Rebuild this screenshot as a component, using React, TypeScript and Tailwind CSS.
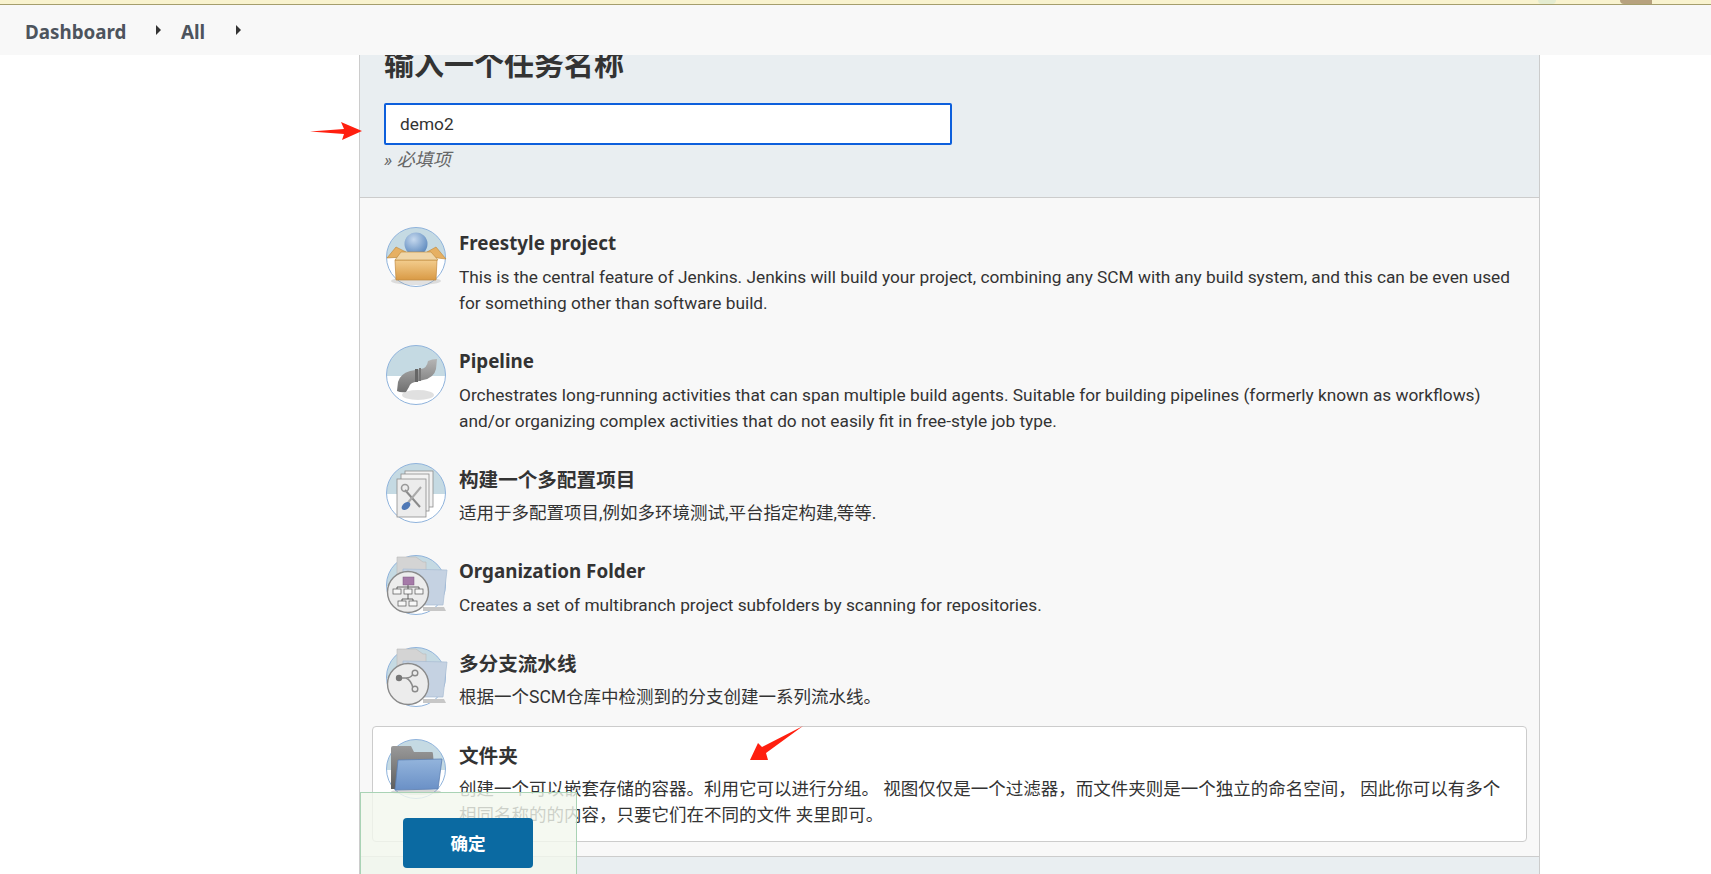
import type { ReactNode } from "react"

const ui = "font-['Roboto','Noto_Sans_CJK_SC',sans-serif]"
const heading = "font-['Noto_Sans','Noto_Sans_CJK_SC',sans-serif]"

// Shared round backdrop of the job type icons
const Disc = ({ id }: { id: string }) => (
  <>
    <defs>
      <clipPath id={id}>
        <circle cx="30" cy="30" r="29.5" />
      </clipPath>
    </defs>
    <circle cx="30" cy="30" r="29.5" fill="#fff" />
    <rect x="0" y="0" width="60" height="31" fill="#c5dae3" clipPath={`url(#${id})`} />
    <circle cx="30" cy="30" r="29.5" fill="none" stroke="#8fb3dc" strokeWidth="1" />
  </>
)

const FreestyleIcon = () => (
  <svg width="60" height="60" viewBox="0 0 60 60" className="overflow-visible">
    <defs>
      <radialGradient id="ball" cx="0.4" cy="0.3" r="0.8">
        <stop offset="0" stopColor="#c6d9ee" />
        <stop offset="1" stopColor="#4f7fb8" />
      </radialGradient>
      <linearGradient id="box" x1="0" y1="0" x2="0" y2="1">
        <stop offset="0" stopColor="#f3cd8e" />
        <stop offset="1" stopColor="#d99a45" />
      </linearGradient>
    </defs>
    <Disc id="d1" />
    <ellipse cx="30" cy="54" rx="25" ry="4" fill="#9a9a9a" opacity="0.3" />
    <circle cx="30" cy="17" r="11.5" fill="url(#ball)" />
    <path d="M10 20 L20 25 L17 30 L1 31 Z M50 20 L41 25 L43 30 L60 32 Z" fill="#e6b063" stroke="#bd8636" strokeWidth="0.6" />
    <path d="M9 33 L51 33 L50 53 L10 53 Z" fill="url(#box)" stroke="#c08a40" strokeWidth="0.7" />
    <path d="M15 25 L45 25 L52 33 L9 33 Z" fill="#f0d6a8" stroke="#bd8636" strokeWidth="0.6" />
  </svg>
)

const PipelineIcon = () => (
  <svg width="60" height="60" viewBox="0 0 60 60">
    <defs>
      <linearGradient id="pipe" x1="0" y1="0" x2="0" y2="1">
        <stop offset="0" stopColor="#b5b5b5" />
        <stop offset="1" stopColor="#6f6f6f" />
      </linearGradient>
    </defs>
    <Disc id="d2" />
    <ellipse cx="32" cy="50" rx="16" ry="5" fill="#bbb" opacity="0.45" />
    <path d="M11 46 L12 37 Q14 29 24 26 L35 24 Q41 23 42 16 Q46 14 51 14 L50 24 Q48 33 37 35 L29 37 Q24 38 23 42 L20 47 Q15 48 11 46 Z" fill="url(#pipe)" />
    <rect x="29" y="24" width="3" height="13" fill="#666" />
    <rect x="33" y="23" width="2" height="13" fill="#777" />
  </svg>
)

const MultiConfigIcon = () => (
  <svg width="60" height="60" viewBox="0 0 60 60">
    <Disc id="d3" />
    <rect x="19" y="8" width="28" height="36" fill="#f2f2f2" stroke="#8d8d8d" strokeWidth="0.8" />
    <rect x="15" y="11" width="28" height="37" fill="#f2f2f2" stroke="#8d8d8d" strokeWidth="0.8" />
    <rect x="11" y="16" width="29" height="38" fill="#ececec" stroke="#8d8d8d" strokeWidth="0.8" />
    <path d="M19 27 L34 44" stroke="#8a8a8a" strokeWidth="2" />
    <path d="M35 24 L20 42" stroke="#aaaaaa" strokeWidth="2" />
    <circle cx="19" cy="25" r="3.5" fill="none" stroke="#999" strokeWidth="1.6" />
    <ellipse cx="20" cy="43" rx="5" ry="3.2" transform="rotate(-40 20 43)" fill="#4f78b5" />
  </svg>
)

const BackFolder = () => (
  <>
    <path d="M11 2 L30 2 L37 7 L40 7 L40 44 L11 44 Z" fill="#d4d4d4" stroke="#bbb" strokeWidth="0.6" />
    <path d="M17 14 L61 15 L57 50 L17 50 Z" fill="#c5d2e2" stroke="#a8bbd3" strokeWidth="0.7" />
    <path d="M37 52 L58 52 L60 56 L37 56 Z" fill="#c7c7c7" />
  </>
)

const OrgFolderIcon = () => (
  <svg width="60" height="60" viewBox="0 0 60 60" className="overflow-visible">
    <Disc id="d4" />
    <BackFolder />
    <circle cx="22" cy="37" r="20.5" fill="#ececec" stroke="#8a8a8a" strokeWidth="1.4" />
    <rect x="17" y="22" width="11" height="8" fill="#a57aa8" stroke="#7d5a80" strokeWidth="0.5" />
    <g fill="#f7f7f7" stroke="#555" strokeWidth="0.7">
      <rect x="7" y="34" width="8" height="5" />
      <rect x="18" y="34" width="8" height="5" />
      <rect x="29" y="34" width="8" height="5" />
      <rect x="12" y="46" width="8" height="5" />
      <rect x="23" y="46" width="8" height="5" />
    </g>
    <path d="M22 30 V34 M11 34 V32 H33 V34 M22 39 V44 M16 46 V44 H27 V46" fill="none" stroke="#444" strokeWidth="0.8" />
  </svg>
)

const BranchFolderIcon = () => (
  <svg width="60" height="60" viewBox="0 0 60 60" className="overflow-visible">
    <Disc id="d5" />
    <BackFolder />
    <circle cx="22" cy="37" r="20.5" fill="#ececec" stroke="#8a8a8a" strokeWidth="1.4" />
    <path d="M13 31 H20 Q25 31 27 27 M20 31 Q25 33 27 41" fill="none" stroke="#8a8a8a" strokeWidth="1.6" />
    <circle cx="13" cy="31" r="3.2" fill="#777" />
    <circle cx="29" cy="26" r="2.8" fill="#ececec" stroke="#8a8a8a" strokeWidth="1.4" />
    <circle cx="29" cy="42" r="2.8" fill="#ececec" stroke="#8a8a8a" strokeWidth="1.4" />
  </svg>
)

const FolderIcon = () => (
  <svg width="60" height="60" viewBox="0 0 60 60" className="overflow-visible">
    <defs>
      <linearGradient id="tab" x1="0" y1="0" x2="0" y2="1">
        <stop offset="0" stopColor="#9a9a9a" />
        <stop offset="1" stopColor="#5e5e5e" />
      </linearGradient>
      <linearGradient id="front" x1="0" y1="0" x2="0" y2="1">
        <stop offset="0" stopColor="#93b4dc" />
        <stop offset="1" stopColor="#6a90c6" />
      </linearGradient>
    </defs>
    <Disc id="d6" />
    <ellipse cx="30" cy="53" rx="25" ry="3" fill="#999" opacity="0.4" />
    <path d="M5 9 Q5 7 7 7 L25 7 L28 13 L46 13 Q47 13 47 15 L50 50 L5 50 Z" fill="url(#tab)" />
    <path d="M12 21 L56 20 L52 50 L9 51 Z" fill="url(#front)" stroke="#5d80b3" strokeWidth="0.8" />
  </svg>
)

type ItemProps = { icon: ReactNode; title: string; cjk?: boolean; selected?: boolean; children: ReactNode }

const JobItem = ({ icon, title, cjk, selected, children }: ItemProps) => (
  <div className={`flex rounded-[4px] border pl-[13px] pt-[12px] ${selected ? "h-[116px] border-[#cccccc] bg-white" : "border-transparent"}`}>
    <div className="w-[73px] shrink-0">{icon}</div>
    <div className="w-[1058px]">
      <div className={`mb-[4px] font-bold leading-[33px] text-[#333333] ${heading} ${cjk ? "text-[19.6px]" : "text-[18.8px]"}`}>{title}</div>
      <p className={`leading-[26px] text-[#333333] ${cjk ? "text-[17.5px]" : "text-[17.3px]"}`}>{children}</p>
    </div>
  </div>
)

export default function App() {
  return (
    <div className={`relative h-[874px] overflow-hidden bg-white ${ui}`}>
      {/* Strip left over from the page header */}
      <div className="relative z-10 h-[5px] overflow-hidden border-b border-[#a59e6d] bg-[#f9f3cf]">
        <div className="absolute left-[1538px] top-0 h-[4px] w-[18px] rounded-b-full bg-[#e4ecd0]" />
        <div className="absolute left-[1620px] top-0 h-[4px] w-[32px] rounded-bl-[12px] bg-[#b7a27e]" />
      </div>
      <nav className={`relative z-10 flex h-[50px] items-center bg-[#f8f8f8] pl-[25px] text-[18.8px] font-bold text-[#4d545d] ${heading}`}>
        <span className="mt-[4px] w-[131px]">Dashboard</span>
        <span className="h-0 w-0 border-y-[5px] border-l-[5px] border-y-transparent border-l-[#333333]" />
        <span className="ml-[20px] mt-[4px] w-[55px]">All</span>
        <span className="h-0 w-0 border-y-[5px] border-l-[5px] border-y-transparent border-l-[#333333]" />
      </nav>

      <main className="ml-[359px] w-[1181px] border-x border-[#cccccc] bg-[#f8f8f8]">
        <header className="flow-root h-[143px] border-b border-[#cccccc] bg-[#e9eef1] pl-[24px]">
          <h1 className="-mt-[10px] text-[30px] font-bold leading-[40px] text-[#333333]">输入一个任务名称</h1>
          <div className="mt-[18px] flex h-[42px] w-[568px] items-center rounded-[2px] border-[2px] border-[#0d5fdc] bg-white pl-[14px] pt-[2px] text-[17.3px] text-[#333333]">
            demo2
          </div>
          <div className="mt-[2px] text-[18px] italic leading-[26px] text-[#666666]">» 必填项</div>
        </header>

        <div className="px-[12px] pb-[14px] pt-[16px]">
          <div className="h-[118px]">
            <JobItem icon={<FreestyleIcon />} title="Freestyle project">
              This is the central feature of Jenkins. Jenkins will build your project, combining any SCM with any build system, and this can be even used for something other than software build.
            </JobItem>
          </div>
          <div className="h-[118px]">
            <JobItem icon={<PipelineIcon />} title="Pipeline">
              Orchestrates long-running activities that can span multiple build agents. Suitable for building pipelines (formerly known as workflows) and/or organizing complex activities that do not easily fit in free-style job type.
            </JobItem>
          </div>
          <div className="h-[92px]">
            <JobItem icon={<MultiConfigIcon />} title="构建一个多配置项目" cjk>
              适用于多配置项目,例如多环境测试,平台指定构建,等等.
            </JobItem>
          </div>
          <div className="h-[92px]">
            <JobItem icon={<OrgFolderIcon />} title="Organization Folder">
              Creates a set of multibranch project subfolders by scanning for repositories.
            </JobItem>
          </div>
          <div className="h-[92px]">
            <JobItem icon={<BranchFolderIcon />} title="多分支流水线" cjk>
              根据一个SCM仓库中检测到的分支创建一系列流水线。
            </JobItem>
          </div>
          <JobItem icon={<FolderIcon />} title="文件夹" cjk selected>
            创建一个可以嵌套存储的容器。利用它可以进行分组。 视图仅仅是一个过滤器，而文件夹则是一个独立的命名空间， 因此你可以有多个相同名称的的内容，只要它们在不同的文件 夹里即可。
          </JobItem>
        </div>
        <div className="h-[40px] border-t border-[#cccccc] bg-[#e9eef1]" />
      </main>

      {/* Sticky submit bar over the list */}
      <div className="absolute left-[360px] top-[792px] z-20 h-[100px] w-[217px] border border-[#a9d3b5] bg-[#f3f8ee]/80 pl-[42px] pt-[25px]">
        <button className="h-[50px] w-[130px] rounded-[4px] bg-[#0b6aa2] pt-[3px] text-[17.6px] font-bold text-white">确定</button>
      </div>

      {/* Red annotation arrows */}
      <svg className="absolute left-[310px] top-[120px] z-20" width="54" height="24" viewBox="0 0 54 24">
        <path d="M-1 11.5 L34 9 L31 2 L52 11 L32 20 L34 14 Z" fill="#ff1f0f" />
      </svg>
      <svg className="absolute left-[745px] top-[722px] z-20" width="60" height="42" viewBox="0 0 60 42">
        <path d="M58 4 L21 31 L23 38 L5 38 L13 21 L17 25 Z" fill="#ff1f0f" />
      </svg>
    </div>
  )
}
